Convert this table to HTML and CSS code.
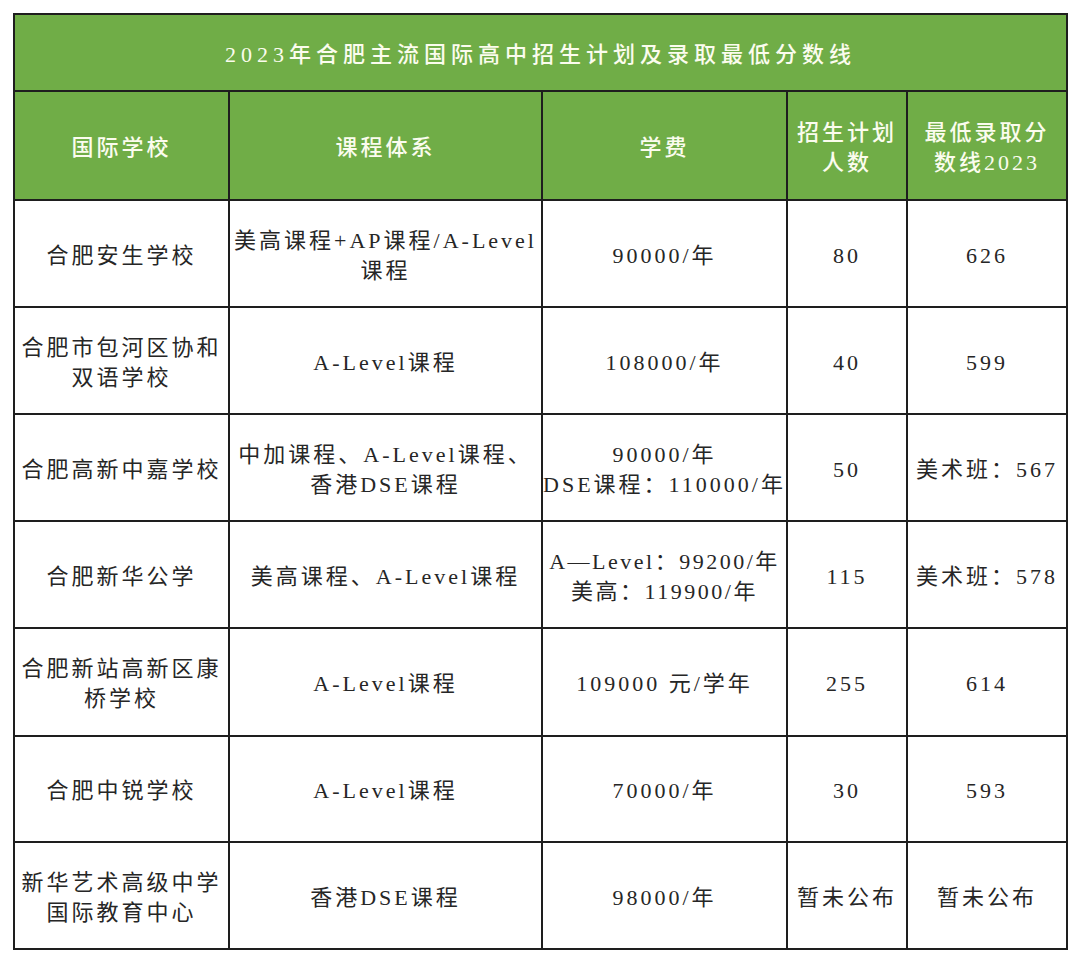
FILE: index.html
```html
<!DOCTYPE html>
<html lang="zh">
<head>
<meta charset="utf-8">
<title>2023年合肥主流国际高中招生计划及录取最低分数线</title>
<link rel="stylesheet" href="styles.css">
</head>
<body>
<div class="page">
<table class="plan">
  <colgroup>
    <col class="c1"><col class="c2"><col class="c3"><col class="c4"><col class="c5">
  </colgroup>
  <thead>
    <tr class="title-row"><th colspan="5" class="title">2023年合肥主流国际高中招生计划及录取最低分数线</th></tr>
    <tr class="head-row">
      <th>国际学校</th>
      <th>课程体系</th>
      <th>学费</th>
      <th>招生计划<br>人数</th>
      <th>最低录取分<br>数线2023</th>
    </tr>
  </thead>
  <tbody>
    <tr class="r1">
      <td>合肥安生学校</td>
      <td>美高课程+AP课程/A-Level<br>课程</td>
      <td>90000/年</td>
      <td>80</td>
      <td>626</td>
    </tr>
    <tr class="r2">
      <td>合肥市包河区协和<br>双语学校</td>
      <td>A-Level课程</td>
      <td>108000/年</td>
      <td>40</td>
      <td>599</td>
    </tr>
    <tr class="r3">
      <td>合肥高新中嘉学校</td>
      <td>中加课程、A-Level课程、<br>香港DSE课程</td>
      <td>90000/年<br>DSE课程：110000/年</td>
      <td>50</td>
      <td>美术班：567</td>
    </tr>
    <tr class="r4">
      <td>合肥新华公学</td>
      <td>美高课程、A-Level课程</td>
      <td class="tight">A—Level：99200/年<br>美高：119900/年</td>
      <td>115</td>
      <td>美术班：578</td>
    </tr>
    <tr class="r5">
      <td>合肥新站高新区康<br>桥学校</td>
      <td>A-Level课程</td>
      <td>109000 元/学年</td>
      <td>255</td>
      <td>614</td>
    </tr>
    <tr class="r6">
      <td>合肥中锐学校</td>
      <td>A-Level课程</td>
      <td>70000/年</td>
      <td>30</td>
      <td>593</td>
    </tr>
    <tr class="r7">
      <td>新华艺术高级中学<br>国际教育中心</td>
      <td>香港DSE课程</td>
      <td>98000/年</td>
      <td>暂未公布</td>
      <td>暂未公布</td>
    </tr>
  </tbody>
</table>
</div>
</body>
</html>
```
FILE: styles.css
```css
html, body {
  margin: 0;
  padding: 0;
  background: #ffffff;
}

.page {
  padding: 13px 0 0 13px;
}

.plan {
  border-collapse: collapse;
  table-layout: fixed;
  width: 1053px;
  font-family: "Liberation Serif", "Noto Sans CJK SC", serif;
  font-size: 22px;
  line-height: 30px;
  color: #262626;
}

.c1 { width: 215px; }
.c2 { width: 313px; }
.c3 { width: 245px; }
.c4 { width: 120px; }
.c5 { width: 160px; }

.plan th,
.plan td {
  border: 2px solid #1e1e1e;
  padding: 4px 0 0 0;
  text-align: center;
  vertical-align: middle;
  white-space: nowrap;
  letter-spacing: 3px;
  overflow: visible;
}

.plan th {
  background: #70ad47;
  color: #fbfcee;
  font-weight: 500;
}

.plan .title {
  letter-spacing: 5px;
  font-size: 22px;
}

.title-row { height: 77px; }
.head-row { height: 109px; }
.r1 { height: 107px; }
.r2 { height: 107px; }
.r3 { height: 107px; }
.r4 { height: 107px; }
.r5 { height: 108px; }
.r6 { height: 106px; }
.r7 { height: 107px; }

.plan td.tight {
  letter-spacing: 2.5px;
}
```
